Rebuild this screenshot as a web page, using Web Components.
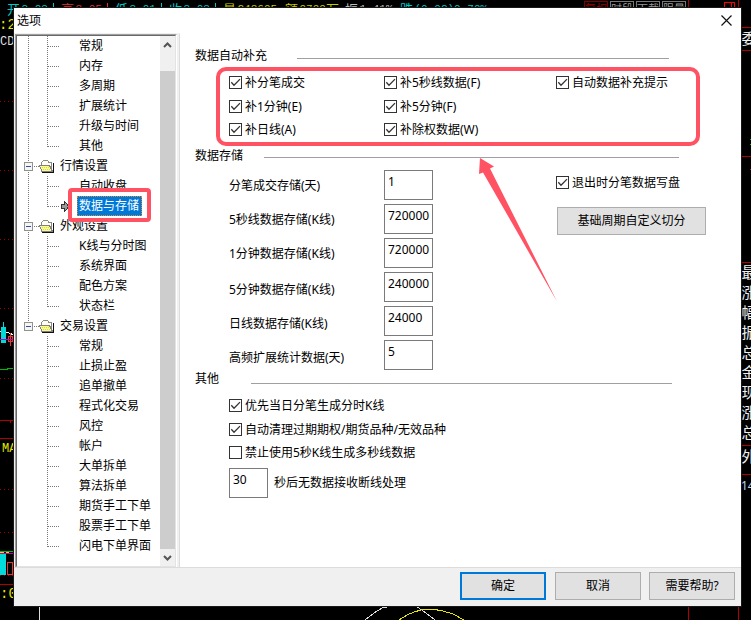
<!DOCTYPE html>
<html lang="zh-CN">
<head>
<meta charset="utf-8">
<title>选项</title>
<style>
html,body{margin:0;padding:0;background:#000;overflow:hidden}
body{width:751px;height:620px;position:relative;color:#000;font:12px/16px "Noto Sans","Noto Sans CJK SC",sans-serif}
</style>
</head>
<body>
<chart-backdrop></chart-backdrop>
<option-dialog heading="选项">
  <option-tree slot="tree"></option-tree>
  <settings-page slot="page"></settings-page>
  <push-button slot="actions" primary>确定</push-button>
  <push-button slot="actions">取消</push-button>
  <push-button slot="actions">需要帮助?</push-button>
</option-dialog>
<mark-overlay></mark-overlay>
<script>
function define(name, html, setup) {
  customElements.define(name, class extends HTMLElement {
    connectedCallback() {
      if (this.shadowRoot) return;
      this.attachShadow({ mode: 'open' }).innerHTML = html;
      if (setup) setup(this, this.shadowRoot);
    }
  });
}

/* Trading chart visible around the dialog */
define('chart-backdrop', `
<style>
:host{position:absolute;inset:0;overflow:hidden;background:#000}
svg{display:block}
text{font-family:"Liberation Mono","Noto Sans CJK SC",monospace;font-size:11px}
.c{font-size:13px;font-family:"Noto Sans CJK SC",sans-serif}
.s{font-size:15px;font-family:"Noto Sans CJK SC",sans-serif}
.t{font-size:11px;font-family:"Noto Sans CJK SC",sans-serif}
</style>
<svg width="751" height="620" viewBox="0 0 751 620" shape-rendering="crispEdges">
  <g id="quote"></g>
  <g fill="none" stroke="#800000"><path d="M584.5 8V1.500H607.500V8"/><path stroke="#777" d="M610.500 8V1.500H633.500V8M636.500 8V1.500H659.500V8M662.500 8V1.500H685.500V8"/></g>
  <g fill="#999"><text class="t" x="585" y="13" fill="#900">复权</text><text class="t" x="611" y="13">时段</text><text class="t" x="637" y="13">下载</text><text class="t" x="663" y="13">限量</text></g>
  <path d="M688.500 0V8M738.500 0V8M688.500 606V620M738.500 606V620M741 27.500H751M741 50.500H751M741 156.500H751M741 262.500H751M741 445.500H751M741 474.500H751M0 420.500H14M10.500 420V423M0 438.500H14M0 584.500H14" stroke="#b00000" fill="none"/>
  <path d="M724.500 8V2.500H734.500V8M731.500 8V3" stroke="#f00" fill="none"/>
  <path d="M0 101.500H14M0 170.500H14M0 239.500H14M0 308.500H14M0 378.500H14M0 489.500H14M0 532.500H14M0 575.500H14" stroke="#a00000" stroke-dasharray="1 3" fill="none"/>
  <text x="-1" y="29" fill="#e6e600" style="font-size:14px">:2</text><text x="0" y="45" fill="#ddd" style="font-size:12px">CD</text>
  <text x="2" y="452" fill="#e6e600" style="font-size:12px">MA</text><text x="0" y="598" fill="#e6e600" style="font-size:14px">:0</text>
  <path d="M0 369.500H7V368.500H14" stroke="#00b800" fill="none"/>
  <path d="M0 331.500H5L14 335" stroke="#fff" fill="none"/>
  <path d="M1 327H6V343H1ZM3 322H4V327H3ZM0 553H6V575H0Z" fill="#00dada"/>
  <path d="M8.500 336.500H12.500V341.500H8.500ZM10.500 333V346M7.500 562.500H12.500V574.500H7.500Z" stroke="#e33" fill="none"/><path d="M0 339.500H13" stroke="#c000c0"/>
  <path d="M0 551.500H14" stroke="#00b800"/><path d="M0 552.500H9" stroke="#dd0" stroke-dasharray="4 2"/><path d="M0 553.500H14" stroke="#c000c0"/>
  <path d="M39.500 606V620M365 620L374 613L382 608L391 606M416 606L426 613L435 620" stroke="#ddd" fill="none"/>
  <path d="M399 620L407 615L414 612L421 610L432 609L443 611L453 614L464 620" stroke="#e6e600" fill="none"/>
  <path d="M750 139.500H751M750 144.500H751" stroke="#0b0"/><path d="M750 169.500H751" stroke="#c00"/>
  <g id="side" fill="#f0f0f0"></g>
  <text x="741" y="490" fill="#b9d4f5" style="font-size:12px;font-family:'Noto Sans',sans-serif">14</text>
</svg>`, (el, root) => {
  const svgText = (x, y, t, fill, cls) => `<text x="${x}" y="${y}"${fill ? ` fill="${fill}"` : ''}${cls ? ` class="${cls}"` : ''}>${t}</text>`;
  root.getElementById('quote').innerHTML = [
    [7, '开', '3.03', '#00c8c8'], [61, '高', '3.05', '#e03030'], [115, '低', '3.01', '#00c8c8'], [169, '收', '3.03', '#00c8c8'],
    [223, '量', '243695', '#c8c800'], [285, '额', '9799', '#c8c800'], [345, '振', '1.41%', '#bbb'], [400, '跌', '(0.02)0.79%', '#00c8c8']
  ].map(([x, a, b, c]) => svgText(x, 13.5, a, c, 'c') + svgText(x + 14.5, 12, b, c)).join('')
    + svgText(326, 13.5, '万', '#c8c800', 'c')
    + [[53, '#00c8c8'], [107, '#e03030'], [161, '#00c8c8'], [215, '#00c8c8']].map(([x, c]) => `<path d="M${x}.5 3V8" stroke="${c}"/>`).join('');
  root.getElementById('side').innerHTML = [['委', 38], ['最', 272], ['涨', 292], ['幅', 312], ['振', 332], ['总', 352], ['金', 372], ['现', 392], ['涨', 412], ['总', 432], ['外', 456]]
    .map(([t, y]) => svgText(741.5, y + 6, t, '', 's')).join('');
});

/* Dialog frame */
define('option-dialog', `
<style>
:host{position:absolute;left:14px;top:8px;width:727px;height:598px;display:flex;flex-direction:column;background:#fff;box-shadow:0 0 0 1px #181818}
header{height:25px;display:flex;justify-content:space-between;align-items:center;padding:0 9px 0 3px;flex:none}
header svg{display:block;margin-top:-1px}
main{flex:1;display:flex;min-height:0;background:#f0f0f0;gap:2px}
.page{flex:1;background:#fff;border-left:1px solid #dcdcdc;border-top:1px solid #fff}
footer{height:39px;flex:none;box-sizing:border-box;background:#f0f0f0;border-top:1px solid #dcdcdc;padding:4px 6px 0;display:flex;justify-content:flex-end;gap:8px}
::slotted(push-button){width:86px}
::slotted(push-button[primary]){margin-right:1px}
</style>
<header><span id="title"></span><svg width="11" height="11" viewBox="0 0 11 11"><path d="M.5.5l10 10M10.500.5l-10 10" stroke="#111" stroke-width="1.200"/></svg></header>
<main><slot name="tree"></slot><div class="page"><slot name="page"></slot></div></main>
<footer><slot name="actions"></slot></footer>`, (el, root) => { root.getElementById('title').textContent = el.getAttribute('heading'); });

define('push-button', `
<style>
:host{display:flex;align-items:center;justify-content:center;box-sizing:border-box;height:28px;background:#e1e1e1;border:1px solid #adadad}
:host([primary]){border:2px solid #0078d7}
</style><slot></slot>`);

define('check-box', `
<style>
:host{display:flex;gap:3px;height:16px;white-space:nowrap}
svg{flex:none;margin-top:1px}
path{display:none}
:host([checked]) path{display:block}
</style>
<svg width="13" height="13" viewBox="0 0 13 13"><rect x=".5" y=".5" width="12" height="12" fill="#fff" stroke="#333"/><path d="M2.300 6.300L5 9.200L11 3.100" fill="none" stroke="#333" stroke-width="1.300"/></svg><span><slot></slot></span>`);

define('edit-field', `
<style>
:host{display:block;box-sizing:border-box;width:49px;height:30px;border:1px solid #7a7a7a;background:#fff;padding:3px 0 0 3px}
</style><slot></slot>`);

define('group-title', `
<style>
:host{display:flex;height:16px;margin-left:15px;white-space:nowrap}
i{height:1px;background:#a0a0a0;width:var(--w);margin:var(--drop) 0 0 auto}
</style><slot></slot><i></i>`);

define('settings-page', `
<style>
:host{display:block;padding-top:14px}
.checks{display:grid;grid-template-columns:155px 172px auto;grid-template-rows:24px 23px 16px;margin:11px 0 0 49px}
.storage{display:flex;margin:6px 0 0 49px}
.rows{width:204px;display:grid;grid-auto-rows:30px;row-gap:4px}
.row{display:grid;grid-template-columns:155px 49px}
.row span{padding-top:var(--p,8px)}
.side{margin-left:123px;padding-top:5px}
.side push-button{width:149px;margin:16px 0 0 1px}
.other{display:grid;grid-template-rows:24px 23px 23px 30px;margin:11px 0 0 49px}
.wait{display:flex;gap:6px}
.wait edit-field{width:39px}
.wait span{padding-top:7px}
</style>
<group-title style="width:474px;--w:372px;--drop:10px">数据自动补充</group-title>
<div class="checks">
<check-box checked>补分笔成交</check-box><check-box checked>补5秒线数据(F)</check-box><check-box checked>自动数据补充提示</check-box>
<check-box checked>补1分钟(E)</check-box><check-box checked style="grid-column:span 2">补5分钟(F)</check-box>
<check-box checked>补日线(A)</check-box><check-box checked>补除权数据(W)</check-box>
</div>
<group-title style="width:484px;margin-top:10px;--w:415px;--drop:9px">数据存储</group-title>
<div class="storage">
<div class="rows">
<div class="row"><span>分笔成交存储(天)</span><edit-field>1</edit-field></div>
<div class="row"><span>5秒线数据存储(K线)</span><edit-field>720000</edit-field></div>
<div class="row"><span>1分钟数据存储(K线)</span><edit-field>720000</edit-field></div>
<div class="row" style="--p:10px"><span>5分钟数据存储(K线)</span><edit-field>240000</edit-field></div>
<div class="row" style="--p:10px"><span>日线数据存储(K线)</span><edit-field>24000</edit-field></div>
<div class="row" style="--p:10px"><span>高频扩展统计数据(天)</span><edit-field>5</edit-field></div>
</div>
<div class="side"><check-box checked>退出时分笔数据写盘</check-box><push-button>基础周期自定义切分</push-button></div>
</div>
<group-title style="width:477px;margin-top:1px;--w:421px;--drop:12px">其他</group-title>
<div class="other">
<check-box checked>优先当日分笔生成分时K线</check-box>
<check-box checked>自动清理过期期权/期货品种/无效品种</check-box>
<check-box>禁止使用5秒K线生成多秒线数据</check-box>
<div class="wait"><edit-field>30</edit-field><span>秒后无数据接收断线处理</span></div>
</div>`);

/* One row of the tree: kind is leaf, last or folder */
define('tree-row', `
<style>
:host{display:flex;height:20px;align-items:center;white-space:nowrap}
svg{flex:none;display:block}
span{padding:0 2px;height:20px;line-height:20px;box-sizing:border-box}
:host([selected]) span{background:#0078d7;color:#fff;outline:1px dotted #e08a30;outline-offset:-1px;width:65px}
</style><div id="g"></div><span><slot></slot></span>`, (el, root) => {
  const kind = el.getAttribute('kind'), dot = 'stroke="#777" stroke-dasharray="1 1" fill="none"';
  const trunk = el.hasAttribute('trunk') ? `<path d="M11.500 0V20" ${dot}/>` : '';
  let body;
  if (kind === 'folder') {
    body = `<path d="M11.500 0V${el.hasAttribute('end') ? 10 : 20}M17 10.500H22" ${dot}/>
    <rect x="7.500" y="6.500" width="8" height="8" rx="1" fill="#f5f5f5" stroke="#919191"/><path d="M9 10.500H14" stroke="#3050a0"/>
    <path d="M24.500 15V6.500L26.500 4.500H30.500L32 6.500H34.500V15" fill="#fffff0" stroke="#888"/>
    <path d="M25 15.500L22.500 9.500H32.500L35.500 15.500Z" fill="#f8f8a0" stroke="#808080"/>
    <path d="M25 11.500H32M26 13.500H33" stroke="#e0e020" stroke-dasharray="1 1"/><path d="M25 16.500H36.500V7" stroke="#111" fill="none"/>`;
  } else {
    body = trunk + `<path d="M30.500 0V${kind === 'last' ? 11 : 20}M31 10.500H42" ${dot}/>`;
    if (el.hasAttribute('selected')) body += '<path d="M44 8.500H47.500V5.500L52 10.500L47.500 15.500V12.500H44Z" fill="#999" stroke="#333"/>';
  }
  const w = kind === 'folder' ? 41 : 60;
  root.getElementById('g').innerHTML = `<svg width="${w}" height="20" viewBox="0 0 ${w} 20" shape-rendering="crispEdges">${body}</svg>`;
});

define('option-tree', `
<style>
:host{display:flex;box-sizing:border-box;width:162px;margin:1px 0 -1px 1px;border:1px solid #a0a0a0;border-right-color:#fff;border-bottom-color:#fff;background:#fff}
.in{flex:1;display:flex;border:1px solid #696969;border-right-color:#e3e3e3;border-bottom-color:#e3e3e3;min-width:0}
.list{flex:1;min-width:0}
.bar{width:15px;background:#f0f0f0;display:flex;flex-direction:column;align-items:center;flex:none}
.bar svg{display:block;flex:none}
.thumb{width:15px;flex:1;background:#cdcdcd;margin-top:18px}
</style>
<div class="in"><div class="list"></div>
<div class="bar"><svg width="15" height="17" viewBox="0 0 15 17"><path d="M4 11L7.500 7.500L11 11" fill="none" stroke="#555" stroke-width="2"/></svg><div class="thumb"></div><svg width="15" height="17" viewBox="0 0 15 17"><path d="M4 7L7.500 10.500L11 7" fill="none" stroke="#555" stroke-width="2"/></svg></div></div>`, (el, root) => {
  const groups = [
    ['', ['常规', '内存', '多周期', '扩展统计', '升级与时间', '其他']],
    ['行情设置', ['自动收盘', '数据与存储']],
    ['外观设置', ['K线与分时图', '系统界面', '配色方案', '状态栏']],
    ['交易设置', ['常规', '止损止盈', '追单撤单', '程式化交易', '风控', '帐户', '大单拆单', '算法拆单', '期货手工下单', '股票手工下单', '闪电下单界面']]
  ];
  root.querySelector('.list').innerHTML = groups.map(([name, items], g) => {
    const end = g === groups.length - 1;
    return (name ? `<tree-row kind="folder"${end ? ' end' : ''}>${name}</tree-row>` : '') +
      items.map((t, i) => `<tree-row kind="${i === items.length - 1 ? 'last' : 'leaf'}"${end ? '' : ' trunk'}${t === '数据与存储' ? ' selected' : ''}>${t}</tree-row>`).join('');
  }).join('');
});

/* Red marker strokes drawn above the dialog */
define('mark-overlay', `
<style>:host{position:absolute;inset:0;pointer-events:none}svg{display:block}</style>
<svg width="751" height="620" viewBox="0 0 751 620"><g fill="none" stroke="#ff5262" stroke-width="4"><rect x="218" y="69" width="480" height="75" rx="8"/><rect x="70" y="190" width="79" height="30" rx="2"/></g>
<path d="M480 158L494 166.500L490 168.500L557 301.500L483 172.500L479 174Z" fill="#ff5262"/></svg>`);
</script>
</body>
</html>
